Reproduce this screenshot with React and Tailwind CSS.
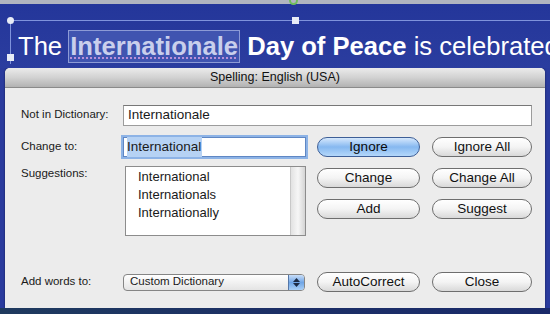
import React from 'react';

const AquaButton = ({ label, primary = false, className = '' }) => (
  <button
    className={
      primary
        ? `h-[20px] rounded-full border border-[#3e5f97] bg-gradient-to-b from-[#d6e8fc] via-[#86b8f0] to-[#b4d8fa] text-[13.5px] leading-none text-[#0a0a0a] ${className}`
        : `h-[20px] rounded-full border border-[#6e6e6e] bg-gradient-to-b from-white via-[#f4f4f4] to-[#d9d9d9] text-[13.5px] leading-none text-[#111] ${className}`
    }
  >
    {label}
  </button>
);

const suggestions = ['International', 'Internationals', 'Internationally'];

export default function App() {
  return (
    <div className="relative flex h-[314px] w-[550px] flex-col overflow-hidden bg-[#2a3b9d] font-['Liberation_Sans',Arial,sans-serif]">
      <div className="h-[4px] bg-[#b1b5c0]" />

      {/* slide text */}
      <div className="relative h-[64px] bg-gradient-to-b from-[#24369a] to-[#2b3d9f]">
        <div className="absolute left-[10px] right-0 top-[16px] h-px bg-[#7f93dc]" />
        <div className="absolute left-[10px] top-[16px] h-[44px] w-px bg-[#7f93dc]" />
        <div className="absolute left-[7px] top-[13px] h-[7px] w-[7px] rounded-full bg-[#e8ecf6]" />
        <div className="absolute left-[7px] top-[50px] h-[7px] w-[7px] bg-[#e8ecf6]" />
        <div className="absolute left-[292px] top-[13px] h-[7px] w-[7px] bg-[#e8ecf6]" />
        <div className="absolute left-[289px] top-[-8px] h-[9px] w-[9px] rounded-full border-2 border-[#6fbf5a]" />

        <p className="mt-[26px] whitespace-nowrap pl-[18px] text-[25.6px] leading-[31px] text-white">
          The{' '}
          <span className="-ml-[1px] inline-block border border-[#8d9bd6] bg-[#4054b0] px-[1px] font-bold text-[#c9cfec] underline decoration-[#b98fd8] decoration-dotted decoration-2 underline-offset-[2px]">
            Internationale
          </span>{' '}
          <span className="font-bold">Day of Peace</span> is celebrated
        </p>
      </div>

      {/* dialog */}
      <div className="ml-[5px] flex h-[240px] w-[540px] flex-col rounded-t-[5px] bg-[#ececec] shadow-[0_0_2px_rgba(0,0,0,0.6)]">
        <div className="flex h-[20px] items-center justify-center rounded-t-[5px] border-b border-[#8a8a8a] bg-gradient-to-b from-[#ebebeb] via-[#d2d2d2] to-[#b2b2b2] text-[12.5px] text-[#111]">
          Spelling: English (USA)
        </div>

        <div className="flex flex-col pl-[16px] pr-[13px] pt-[17px] text-[#1a1a1a]">
          <div className="flex h-[20px] items-center">
            <span className="w-[102px] text-[11.5px]">Not in Dictionary:</span>
            <div className="flex h-[21px] w-[409px] items-center border border-[#9c9c9c] border-t-[#777] bg-white pl-[4px] text-[13.5px]">
              Internationale
            </div>
          </div>

          <div className="mt-[12px] flex">
            <div className="flex w-[285px] flex-col">
              <div className="flex h-[20px] items-center">
                <span className="w-[102px] text-[11.5px]">Change to:</span>
                <div className="flex h-[20px] w-[183px] items-center border border-[#5f87c4] bg-white pl-[3px] text-[13.5px] shadow-[0_0_0_2px_#8db3e6]">
                  <span className="bg-[#b6d2f4] pr-[1px]">International</span>
                </div>
              </div>
              <div className="mt-[9px] flex">
                <span className="-mt-[1px] w-[104px] text-[11.5px]">Suggestions:</span>
                <div className="flex h-[70px] w-[181px] border border-[#8c8c8c] bg-white">
                  <div className="flex flex-1 flex-col pl-[12px] pt-[1px] text-[13px] leading-[18px]">
                    {suggestions.map((s) => (
                      <span key={s}>{s}</span>
                    ))}
                  </div>
                  <div className="w-[15px] border-l border-[#c8c8c8] bg-gradient-to-r from-[#e2e2e2] via-[#f6f6f6] to-[#d4d4d4]" />
                </div>
              </div>
            </div>

            <div className="ml-[11px] grid grid-cols-[103px_100px] gap-x-[12px] gap-y-[11px] self-start">
              <AquaButton label="Ignore" primary />
              <AquaButton label="Ignore All" />
              <AquaButton label="Change" />
              <AquaButton label="Change All" />
              <AquaButton label="Add" />
              <AquaButton label="Suggest" />
            </div>
          </div>

          <div className="mt-[36px] flex items-center">
            <span className="w-[102px] text-[11.5px]">Add words to:</span>
            <div className="flex h-[17px] w-[182px] items-center overflow-hidden rounded-[4px] border border-[#858585] bg-gradient-to-b from-white to-[#e4e4e4]">
              <span className="flex-1 pl-[6px] text-[11.5px] leading-none">Custom Dictionary</span>
              <div className="flex h-full w-[16px] flex-col items-center justify-center gap-[1px] border-l border-[#5577a8] bg-gradient-to-b from-[#c9def8] via-[#6fa5e6] to-[#a9cff6]">
                <svg width="7" height="4" viewBox="0 0 7 4"><path d="M3.5 0 L7 4 L0 4 Z" fill="#1b2a44" /></svg>
                <svg width="7" height="4" viewBox="0 0 7 4"><path d="M0 0 L7 0 L3.5 4 Z" fill="#1b2a44" /></svg>
              </div>
            </div>
            <AquaButton label="AutoCorrect" className="ml-[12px] w-[103px]" />
            <AquaButton label="Close" className="ml-[12px] w-[100px]" />
          </div>
        </div>
      </div>

      <div className="flex-1 bg-gradient-to-r from-[#1f3a5e] via-[#1c2f66] to-[#1a2a6a]" />
    </div>
  );
}
